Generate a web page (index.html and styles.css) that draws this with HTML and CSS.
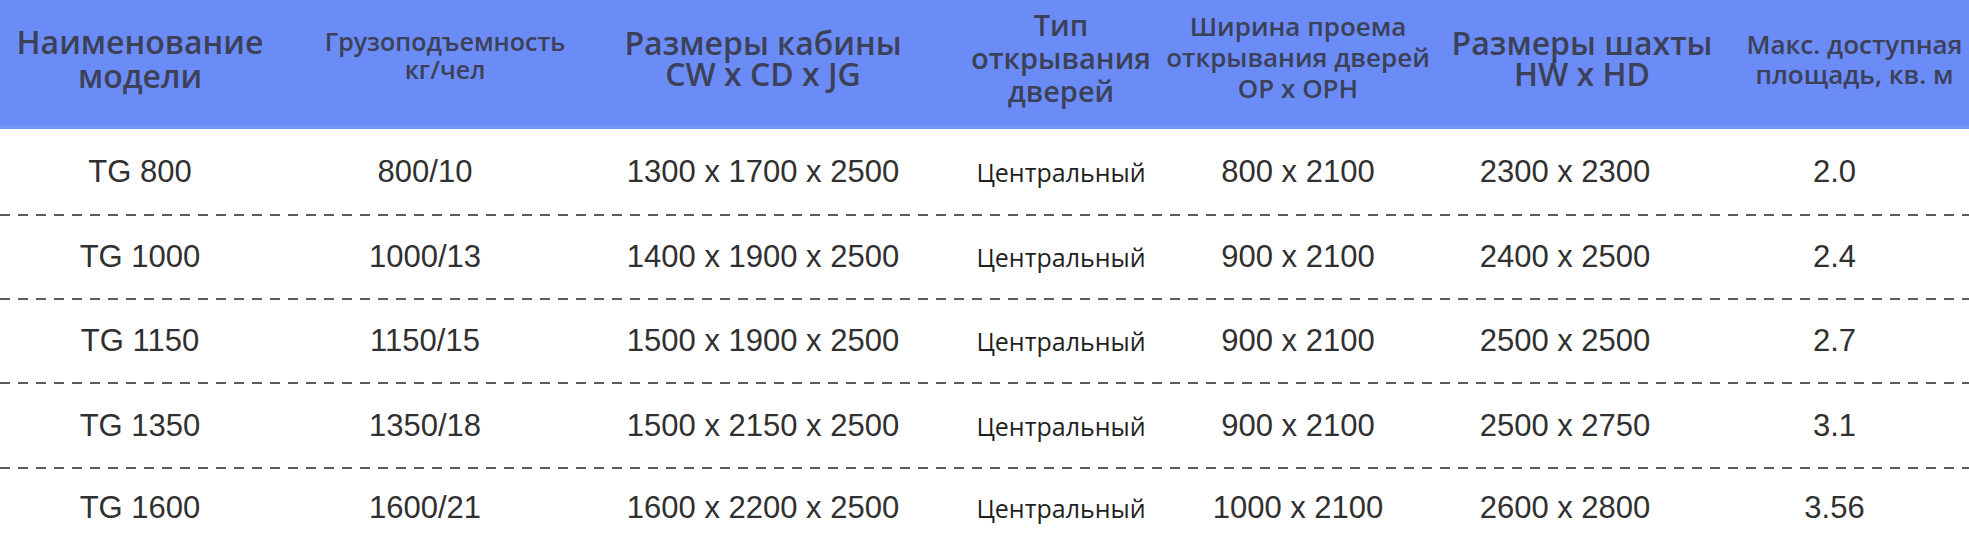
FILE: index.html
```html
<!DOCTYPE html>
<html lang="ru">
<head>
<meta charset="utf-8">
<title>Таблица лифтов</title>
<link rel="stylesheet" href="styles.css">
</head>
<body>
<div class="table">
  <div class="head">
    <div class="hcell h1"><span>Наименование</span><span>модели</span></div>
    <div class="hcell h2"><span>Грузоподъемность</span><span>кг/чел</span></div>
    <div class="hcell h3"><span>Размеры кабины</span><span>CW x CD x JG</span></div>
    <div class="hcell h4"><span>Тип</span><span>открывания</span><span>дверей</span></div>
    <div class="hcell h5"><span>Ширина проема</span><span>открывания дверей</span><span>OP x OPH</span></div>
    <div class="hcell h6"><span>Размеры шахты</span><span>HW x HD</span></div>
    <div class="hcell h7"><span>Макс. доступная</span><span>площадь, кв. м</span></div>
  </div>
  <div class="row first">
    <div class="cell">TG 800</div><div class="cell">800/10</div><div class="cell">1300 x 1700 x 2500</div><div class="cell type">Центральный</div><div class="cell">800 x 2100</div><div class="cell">2300 x 2300</div><div class="cell">2.0</div>
  </div>
  <div class="row">
    <div class="cell">TG 1000</div><div class="cell">1000/13</div><div class="cell">1400 x 1900 x 2500</div><div class="cell type">Центральный</div><div class="cell">900 x 2100</div><div class="cell">2400 x 2500</div><div class="cell">2.4</div>
  </div>
  <div class="row">
    <div class="cell">TG 1150</div><div class="cell">1150/15</div><div class="cell">1500 x 1900 x 2500</div><div class="cell type">Центральный</div><div class="cell">900 x 2100</div><div class="cell">2500 x 2500</div><div class="cell">2.7</div>
  </div>
  <div class="row tall">
    <div class="cell">TG 1350</div><div class="cell">1350/18</div><div class="cell">1500 x 2150 x 2500</div><div class="cell type">Центральный</div><div class="cell">900 x 2100</div><div class="cell">2500 x 2750</div><div class="cell">3.1</div>
  </div>
  <div class="row last">
    <div class="cell">TG 1600</div><div class="cell">1600/21</div><div class="cell">1600 x 2200 x 2500</div><div class="cell type">Центральный</div><div class="cell">1000 x 2100</div><div class="cell">2600 x 2800</div><div class="cell">3.56</div>
  </div>
</div>
</body>
</html>
```

FILE: styles.css
```css
html, body {
  margin: 0;
  padding: 0;
  background: #ffffff;
}

.table {
  width: 1969px;
  height: 547px;
  overflow: hidden;
}

.head,
.row {
  display: grid;
  grid-template-columns: 280px 290px 386px 210px 264px 270px 269px;
}

.head {
  height: 129px;
  box-sizing: border-box;
  padding-bottom: 12px;
  background: #6b8cf7;
  box-shadow: inset 0 -4px 0 #7195f5;
  color: #3c4158;
  font-family: "Open Sans", "DejaVu Sans", sans-serif;
  font-weight: 600;
  align-items: center;
}

.hcell {
  display: flex;
  flex-direction: column;
  align-items: center;
  white-space: nowrap;
}

.h1 { font-size: 32px; line-height: 34px; }
.h2 { font-size: 25px; line-height: 28px; padding-left: 40px; padding-bottom: 8px; }
.h3 { font-size: 32px; line-height: 31px; padding-bottom: 2px; }
.h4 { font-size: 29px; line-height: 33px; padding-bottom: 2px; }
.h5 { font-size: 26px; line-height: 31px; padding-bottom: 2px; }
.h6 { font-size: 32px; line-height: 31px; padding-left: 34px; padding-bottom: 2px; }
.h7 { font-size: 26px; line-height: 30px; padding-left: 40px; }

.row {
  height: 84px;
  box-sizing: border-box;
  padding-bottom: 2px;
  align-items: center;
  background-image: repeating-linear-gradient(90deg, #5a5b5e 0 10px, transparent 10px 18px);
  background-size: 100% 2px;
  background-position: left bottom;
  background-repeat: no-repeat;
  font-family: "Liberation Sans", Arial, sans-serif;
  font-size: 31px;
  color: #303030;
}

.row.first { height: 87px; }
.row.tall { height: 85px; }
.row.last {
  height: 78px;
  background-image: none;
  padding-bottom: 0;
}

.cell {
  text-align: center;
  white-space: nowrap;
}

.cell.type {
  font-family: "Open Sans", "DejaVu Sans", sans-serif;
  font-size: 25px;
  color: #1f1f1f;
}
```
